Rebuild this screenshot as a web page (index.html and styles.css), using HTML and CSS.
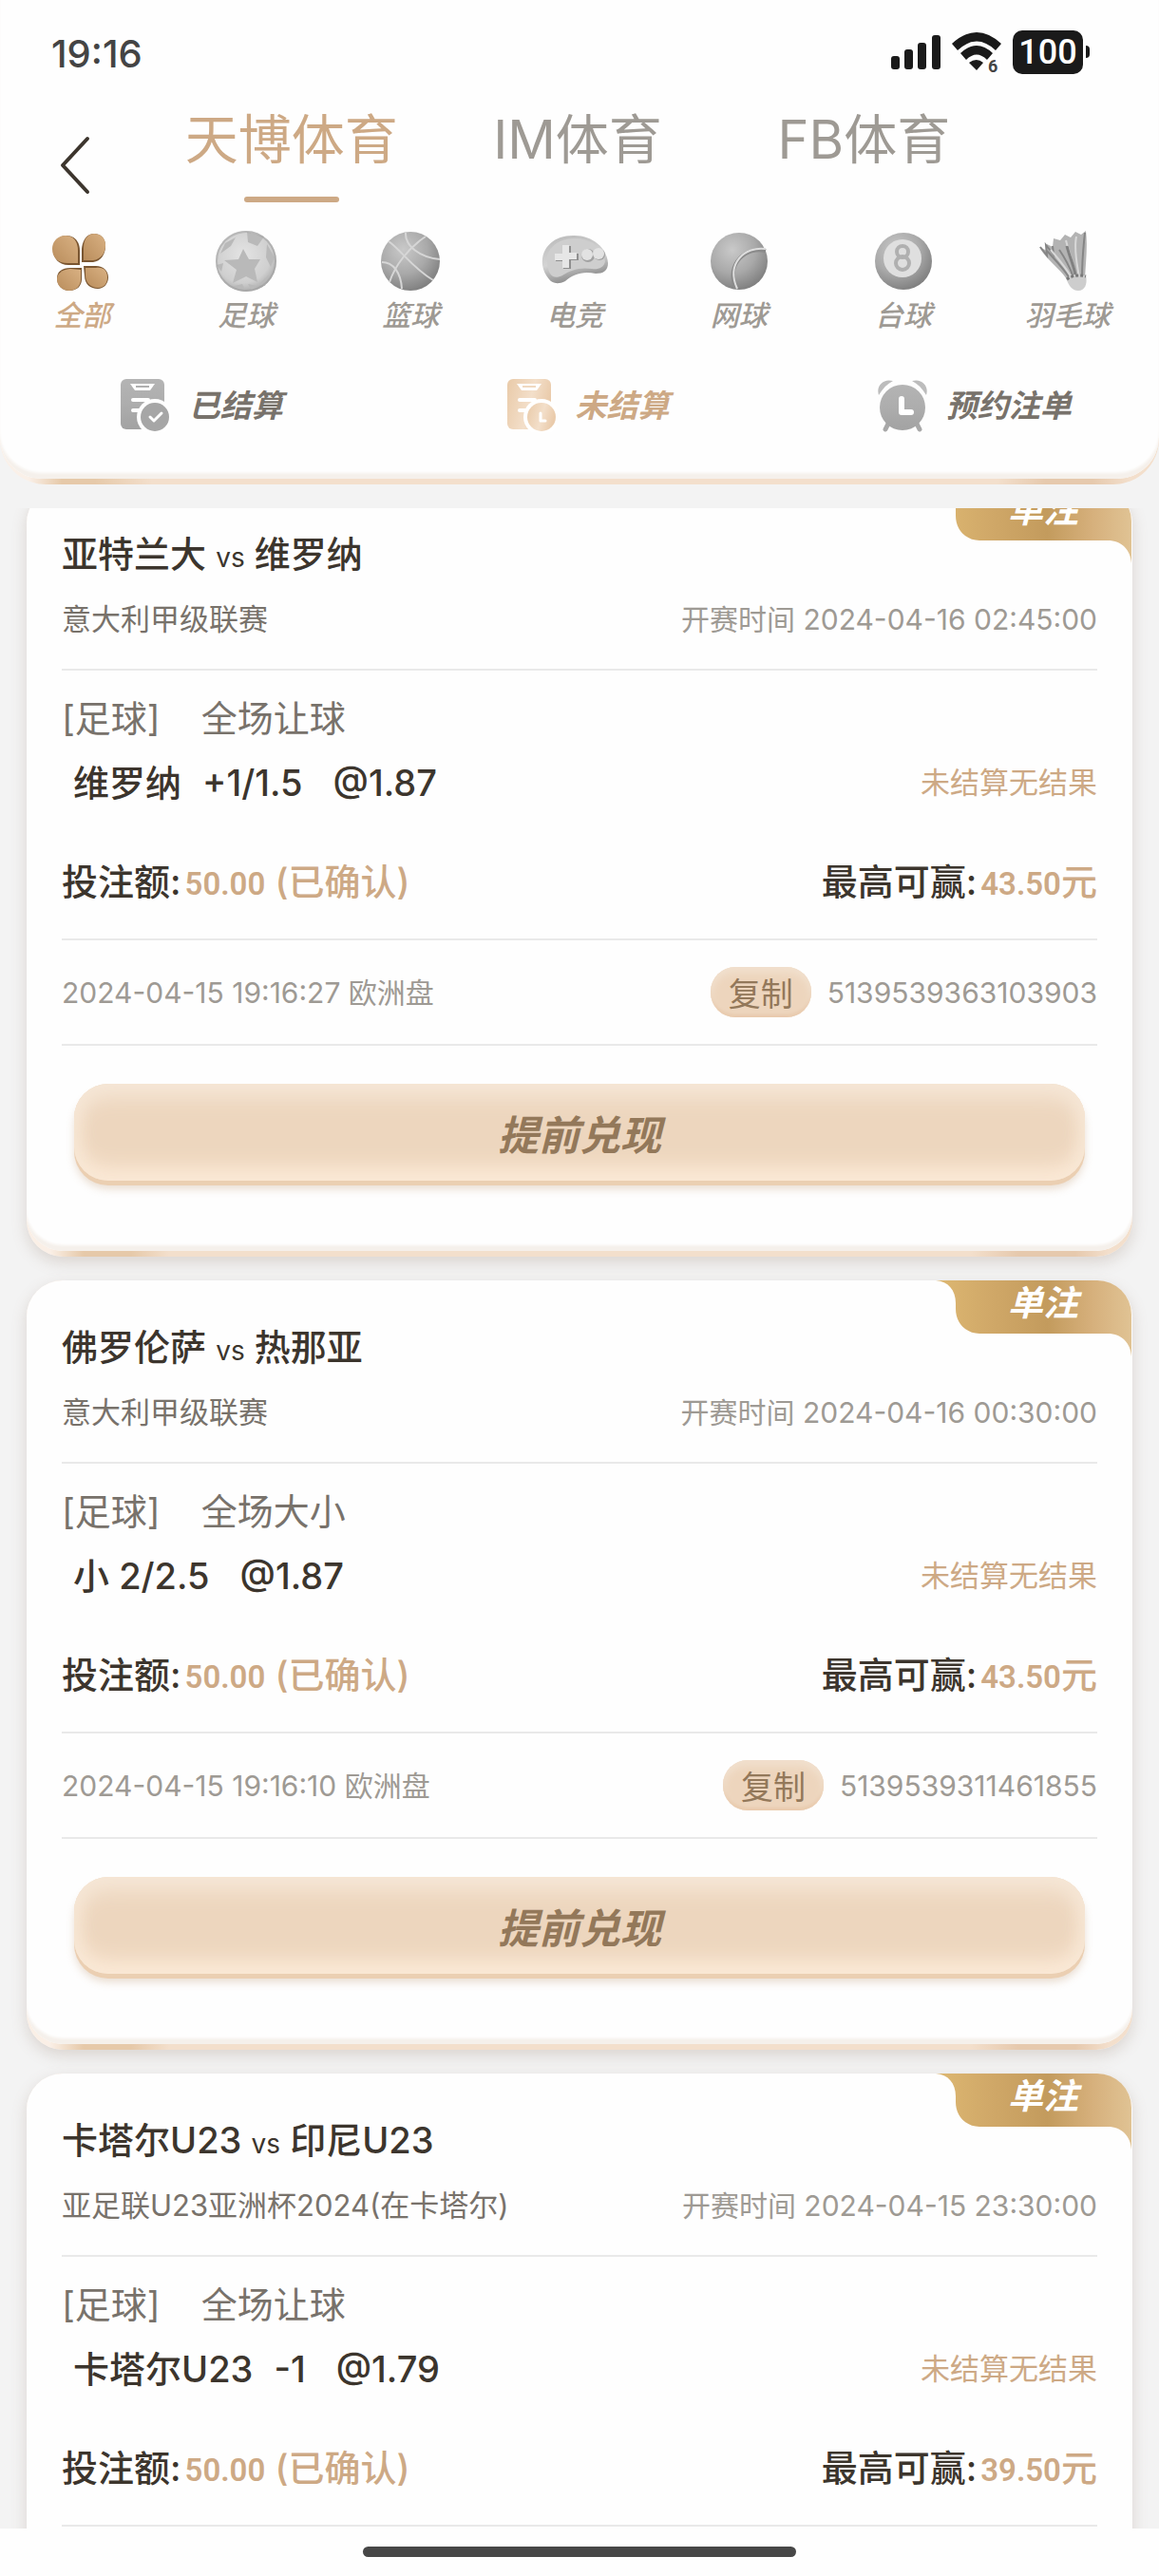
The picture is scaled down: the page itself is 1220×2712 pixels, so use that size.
FILE: index.html
```
<!DOCTYPE html>
<html lang="zh-CN">
<head>
<meta charset="utf-8">
<meta name="viewport" content="width=device-width, initial-scale=1">
<title>投注记录</title>
<link rel="stylesheet" href="styles.css">
</head>
<body>
<svg class="defs" width="0" height="0" aria-hidden="true">
  <defs>
    <radialGradient id="ball" cx="0.38" cy="0.3" r="0.75">
      <stop offset="0" stop-color="#c9c9c9"/><stop offset="0.55" stop-color="#a9a9a9"/><stop offset="1" stop-color="#7c7c7c"/>
    </radialGradient>
    <radialGradient id="soft" cx="0.45" cy="0.4" r="0.65">
      <stop offset="0" stop-color="#e4e4e4"/><stop offset="0.7" stop-color="#cfcfcf"/><stop offset="1" stop-color="#a4a4a4"/>
    </radialGradient>
    <linearGradient id="pad" x1="0" y1="0" x2="0.3" y2="1">
      <stop offset="0" stop-color="#b9b9b9"/><stop offset="0.6" stop-color="#d4d4d4"/><stop offset="1" stop-color="#8e8e8e"/>
    </linearGradient>
    <linearGradient id="petal" x1="1" y1="0" x2="0" y2="1">
      <stop offset="0" stop-color="#d9b183"/><stop offset="1" stop-color="#b98d5c"/>
    </linearGradient>
    <linearGradient id="grey" x1="0" y1="0" x2="0" y2="1">
      <stop offset="0" stop-color="#b4b4b4"/><stop offset="0.5" stop-color="#adadad"/><stop offset="1" stop-color="#a2a2a2"/>
    </linearGradient>
    <linearGradient id="sand" x1="0" y1="0" x2="1" y2="0.3">
      <stop offset="0" stop-color="#e9caa8"/><stop offset="0.6" stop-color="#f3dfca"/><stop offset="1" stop-color="#eacbab"/>
    </linearGradient>
    <linearGradient id="gold" x1="0" y1="0" x2="1" y2="0">
      <stop offset="0.05" stop-color="#dbb570"/><stop offset="0.28" stop-color="#d0a868"/><stop offset="0.57" stop-color="#c39b5d"/><stop offset="0.8" stop-color="#d6b07c"/><stop offset="1" stop-color="#e0c394"/>
    </linearGradient>
    <symbol id="ribbon" viewBox="0 0 207 80">
      <path fill="url(#gold)" d="M0 0H170A36 36 0 0 1 206 36V80C205 66 196 56 181 56H46C32 56 21 45 21 30V24C21 10 13 1 0 0Z"/>
    </symbol>
  </defs>
</svg>

<header class="header">
  <div class="header-body">
    <div class="status">
      <span class="clock">19:16</span>
      <div class="indicators">
        <svg width="52" height="36" viewBox="0 0 52 36" fill="#1a1a1a" aria-hidden="true">
          <rect x="0" y="22" width="9" height="14" rx="3"/><rect x="14" y="15" width="9" height="21" rx="3"/><rect x="28" y="8" width="9" height="28" rx="3"/><rect x="43" y="0" width="9" height="36" rx="3"/>
        </svg>
        <svg class="wifi" width="52" height="42" viewBox="0 0 52 42" fill="#1a1a1a" aria-hidden="true">
          <path d="M0 12Q26-12 52 12L46 19Q26 0 6 19Z"/><path d="M9 22Q26 6 43 22L37 29Q26 18 15 29Z"/><path d="M18 32Q26 26 33 32L26 40Z"/>
          <circle cx="44" cy="34" r="8" fill="#fff"/>
          <text x="38" y="42" font-family="Roboto, sans-serif" font-size="18" font-weight="700" fill="#444">6</text>
        </svg>
        <span class="battery">100</span>
      </div>
    </div>

    <div class="tabs-row">
      <button class="back" type="button" aria-label="返回">
        <svg width="34" height="66" viewBox="0 0 34 66" fill="none" stroke="#3c352d" stroke-width="4" stroke-linecap="round" stroke-linejoin="round"><path d="M30 5 4 33 30 61"/></svg>
      </button>
      <nav class="tabs">
        <a class="tab active" href="#">天博体育</a>
        <a class="tab" href="#">IM体育</a>
        <a class="tab" href="#">FB体育</a>
      </nav>
    </div>

    <nav class="sports">
      <a class="sport active" href="#">
        <svg class="sport-icon" viewBox="0 0 72 72">
          <g fill="#7a5631"><path d="M34 40V25C34 15 28 9 20 9C12 9 6 15 6 24C6 33 12 40 22 40Z"/><path d="M36 37V23C37 13 42 7 49 7C56 7 61 12 61 20C61 29 56 36 48 37Z"/><path d="M36 43V55C36 62 31 67 23 67C15 67 10 61 10 54C10 47 15 43 24 43Z"/><path d="M38 41H51C59 41 64 46 64 53C64 60 59 65 53 65C45 65 39 60 39 51Z"/></g>
          <g fill="url(#petal)"><path d="M32 38V25C32 15 27 9 19 9C11 9 5 15 5 23C5 32 11 38 21 38Z"/><path d="M38 35V22C38 12 43 7 49 7C56 7 61 12 61 19C61 28 56 34 48 35Z"/><path d="M35 45V55C35 62 30 67 23 67C15 67 10 61 10 55C10 49 15 45 24 44Z"/><path d="M40 43H51C59 42 63 46 63 53C63 60 59 64 53 64C46 64 40 59 40 51Z"/></g>
        </svg>
        <span>全部</span>
      </a>
      <a class="sport" href="#">
        <svg class="sport-icon" viewBox="0 0 72 72">
          <circle cx="36" cy="36" r="32" fill="url(#soft)"/>
          <g fill="#b9b9b9"><path d="M33 23 39 34 51 34 45 44 48 58 36 52 22 59 26 45 13 35 28 34Z"/><path d="M14 17 25 11 20 20 9 28ZM37 5 55 10 48 20 38 16ZM58 18 66 32 62 42 57 32ZM5 40 12 38 10 47ZM20 63 32 60 36 68ZM50 60 60 50 56 62ZM38 60 48 62 42 67Z"/></g>
          <circle cx="36" cy="36" r="31" fill="none" stroke="#9c9c9c" stroke-opacity=".5" stroke-width="2"/>
        </svg>
        <span>足球</span>
      </a>
      <a class="sport" href="#">
        <svg class="sport-icon" viewBox="0 0 72 72">
          <circle cx="36" cy="36" r="31" fill="url(#ball)"/>
          <g fill="none" stroke="#d6d6d6" stroke-width="2"><path d="M52 10C34 22 20 40 14 58"/><path d="M13 15C28 26 38 43 60 56"/><path d="M31 6C30 20 46 32 67 34"/><path d="M6 37C18 37 26 48 27 65"/></g>
        </svg>
        <span>篮球</span>
      </a>
      <a class="sport" href="#">
        <svg class="sport-icon" viewBox="0 0 72 72">
          <path d="M2 40C0 22 14 9 34 9C54 8 70 22 71 38C71 46 66 49 58 49C44 46 34 50 26 57C18 61 12 59 9 55C5 50 3 46 2 40Z" fill="url(#pad)"/>
          <path d="M7 38C5 24 16 13 34 12C52 11 66 22 68 36C67 43 60 45 54 44C40 42 31 46 23 51C13 56 8 50 7 38Z" fill="#cecece"/>
          <path d="M24 20h8v8h8v7h-8v9h-8v-8h-8v-7h8z" fill="#8f8f8f"/><path d="M23 19h7v8h8v7h-8v9h-7v-8h-8v-7h8z" fill="#e6e6e6"/>
          <circle cx="50" cy="30" r="7" fill="#a2a2a2"/><circle cx="62" cy="29" r="6" fill="#a2a2a2"/><circle cx="49" cy="29" r="6" fill="#e2e2e2"/><circle cx="61" cy="28" r="6" fill="#e2e2e2"/>
        </svg>
        <span>电竞</span>
      </a>
      <a class="sport" href="#">
        <svg class="sport-icon" viewBox="0 0 72 72">
          <circle cx="36" cy="36" r="30" fill="url(#ball)"/>
          <path d="M64 25C44 20 22 38 32 64" fill="none" stroke="#8a8a8a" stroke-width="4"/><path d="M64 23C42 20 22 38 34 65" fill="none" stroke="#dedede" stroke-width="2"/>
        </svg>
        <span>网球</span>
      </a>
      <a class="sport" href="#">
        <svg class="sport-icon" viewBox="0 0 72 72">
          <circle cx="36" cy="36" r="30" fill="url(#ball)"/><circle cx="35" cy="33" r="20" fill="#dfdfdf"/>
          <g fill="none" stroke="#b0b0b0" stroke-width="4"><circle cx="35" cy="26" r="6"/><circle cx="35" cy="38" r="7"/></g>
        </svg>
        <span>台球</span>
      </a>
      <a class="sport" href="#">
        <svg class="sport-icon" viewBox="0 0 72 72">
          <path d="M6 21 14 25 14 18 20 21 21 12 28 14 33 8 39 11 44 5 50 8 55 4C57 20 55 36 54 54L35 55C26 42 13 34 6 21Z" fill="#b3b3b3"/>
          <g fill="none" stroke-width="2"><path stroke="#858585" d="M14 25C24 36 32 44 38 54M7 21 14 30 13 19 21 29 20 20M27 24C34 34 38 42 42 53M54 6C52 24 51 38 51 53"/><path stroke="#d8d8d8" d="M18 24C28 36 36 45 40 54M34 14C38 30 43 42 45 53M45 10C42 24 46 40 48 53"/><path stroke="#808080" stroke-width="3" d="M35 20C38 32 42 40 44 50"/></g>
          <path d="M34 54C40 50 48 49 55 51C57 60 54 67 47 67C40 67 37 61 34 54Z" fill="#cdcdcd"/><path d="M35 55C40 51 48 50 55 52" fill="none" stroke="#777" stroke-width="3" stroke-dasharray="3 2"/>
        </svg>
        <span>羽毛球</span>
      </a>
    </nav>

    <nav class="filters">
      <a class="filter" href="#">
        <svg width="52" height="56" viewBox="0 0 52 56">
          <rect width="46" height="53" rx="6" fill="url(#grey)"/><path d="M10 5H36L31 12H15Z" fill="#fff"/><path d="M16 8H30" stroke="#b0b0b0" stroke-width="2"/>
          <path d="M13 22H29M13 33H22" stroke="#fff" stroke-width="4" stroke-linecap="round"/>
          <circle cx="36" cy="40" r="19" fill="#fff"/><circle cx="36" cy="40" r="15" fill="#a6a6a6"/><path d="M31 40 35 44 43 36" fill="none" stroke="#fff" stroke-width="3" stroke-linecap="round" stroke-linejoin="round"/>
        </svg>
        <span>已结算</span>
      </a>
      <a class="filter active" href="#">
        <svg width="52" height="56" viewBox="0 0 52 56">
          <rect width="46" height="53" rx="6" fill="url(#sand)"/><path d="M10 5H36L31 12H15Z" fill="#fff"/><path d="M16 8H30" stroke="#f0d9c0" stroke-width="2"/>
          <path d="M13 22H29M13 33H22" stroke="#fff" stroke-width="4" stroke-linecap="round"/>
          <circle cx="36" cy="40" r="19" fill="#fff"/><circle cx="36" cy="40" r="15" fill="url(#sand)"/><path d="M35 36V44H40" fill="none" stroke="#fff" stroke-width="3" stroke-linecap="round" stroke-linejoin="round"/>
        </svg>
        <span>未结算</span>
      </a>
      <a class="filter" href="#">
        <svg width="52" height="56" viewBox="0 0 52 56" fill="#bcbcbc">
          <path d="M1 17C-2 8 5-1 16 2C10 5 5 10 1 17ZM51 17C54 8 47-1 36 2C42 5 47 10 51 17Z"/>
          <path d="M12 45 8 53M40 45 44 53" stroke="#a8a8a8" stroke-width="5" stroke-linecap="round"/>
          <circle cx="26" cy="30" r="24" fill="url(#grey)"/><path d="M25 21V35H35" fill="none" stroke="#fff" stroke-width="6" stroke-linecap="round" stroke-linejoin="round"/>
        </svg>
        <span>预约注单</span>
      </a>
    </nav>
  </div>
</header>

<main class="list">
  <article class="card scrolled">
    <div class="card-body">
      <div class="badge"><svg width="207" height="80" aria-hidden="true"><use href="#ribbon"/></svg><span>单注</span></div>
      <h2 class="match">亚特兰大 <small>vs</small> 维罗纳</h2>
      <div class="row league"><span>意大利甲级联赛</span><time>开赛时间 2024-04-16 02:45:00</time></div>
      <div class="market"><span>[足球]</span><span>全场让球</span></div>
      <div class="row pick"><span class="choice"><b>维罗纳<span class="handicap">+1/1.5</span></b><b>@1.87</b></span><span class="result">未结算无结果</span></div>
      <div class="row stake"><p>投注额:<strong><i>50.00</i> (已确认)</strong></p><p>最高可赢:<strong><i>43.50</i>元</strong></p></div>
      <div class="row ticket"><span>2024-04-15 19:16:27 欧洲盘</span><span class="serial"><button class="copy" type="button">复制</button>5139539363103903</span></div>
      <button class="cashout" type="button">提前兑现</button>
    </div>
  </article>

  <article class="card">
    <div class="card-body">
      <div class="badge"><svg width="207" height="80" aria-hidden="true"><use href="#ribbon"/></svg><span>单注</span></div>
      <h2 class="match">佛罗伦萨 <small>vs</small> 热那亚</h2>
      <div class="row league"><span>意大利甲级联赛</span><time>开赛时间 2024-04-16 00:30:00</time></div>
      <div class="market"><span>[足球]</span><span>全场大小</span></div>
      <div class="row pick"><span class="choice"><b>小 2/2.5</b><b>@1.87</b></span><span class="result">未结算无结果</span></div>
      <div class="row stake"><p>投注额:<strong><i>50.00</i> (已确认)</strong></p><p>最高可赢:<strong><i>43.50</i>元</strong></p></div>
      <div class="row ticket"><span>2024-04-15 19:16:10 欧洲盘</span><span class="serial"><button class="copy" type="button">复制</button>5139539311461855</span></div>
      <button class="cashout" type="button">提前兑现</button>
    </div>
  </article>

  <article class="card">
    <div class="card-body">
      <div class="badge"><svg width="207" height="80" aria-hidden="true"><use href="#ribbon"/></svg><span>单注</span></div>
      <h2 class="match">卡塔尔U23 <small>vs</small> 印尼U23</h2>
      <div class="row league"><span>亚足联U23亚洲杯2024(在卡塔尔)</span><time>开赛时间 2024-04-15 23:30:00</time></div>
      <div class="market"><span>[足球]</span><span>全场让球</span></div>
      <div class="row pick"><span class="choice"><b>卡塔尔U23<span class="handicap">-1</span></b><b>@1.79</b></span><span class="result">未结算无结果</span></div>
      <div class="row stake"><p>投注额:<strong><i>50.00</i> (已确认)</strong></p><p>最高可赢:<strong><i>39.50</i>元</strong></p></div>
    </div>
  </article>
</main>

<footer class="home"><div class="home-bar"></div></footer>
</body>
</html>
```

FILE: styles.css
```
* { box-sizing: border-box; }

body {
  margin: 0;
  height: 100vh;
  display: flex;
  flex-direction: column;
  background: #f3f3f3;
  color: #3c352d;
  font-family: Inter, "Noto Sans CJK SC", sans-serif;
  font-size: 38px;
  line-height: 48px;
}

a { color: inherit; text-decoration: none; }
button { font-family: inherit; border: 0; padding: 0; cursor: pointer; }
svg { display: block; flex: none; }
.defs { position: absolute; }

/* header */
.header {
  flex: none;
  padding-bottom: 6px;
  margin-bottom: 25px;
  border-radius: 0 0 48px 48px;
  background: linear-gradient(90deg, #faf0e8 0, #faf0e8 30px, #e6c9a9 65px, #e6c9a9 100px, #f3dfcc 160px, #f3dfcc calc(100% - 170px), #e6c9ad calc(100% - 120px), #e6c9ad calc(100% - 70px), #f3dfcc calc(100% - 30px));
}
.header-body {
  padding-bottom: 49px;
  border-radius: 0 0 44px 44px;
  background: #fefefe;
  box-shadow: inset 0 -7px 3px -1px #f5f0eb;
}

.status {
  height: 110px;
  padding: 0 80px 0 54px;
  display: flex;
  align-items: center;
  justify-content: space-between;
}
.clock { padding-top: 4px; font-size: 40px; font-weight: 500; color: #444; }
.indicators { display: flex; align-items: center; gap: 12px; }
.wifi { overflow: visible; }
.battery {
  position: relative;
  width: 74px;
  height: 46px;
  border-radius: 10px;
  background: #1a1a1a;
  color: #fff;
  font: 500 36px/46px Roboto, sans-serif;
  text-align: center;
}
.battery::after {
  content: "";
  position: absolute;
  left: 77px;
  top: 16px;
  width: 4px;
  height: 13px;
  border-radius: 0 4px 4px 0;
  background: #1a1a1a;
}

.tabs-row { display: flex; height: 127px; padding-right: 160px; }
.back { width: 156px; padding-left: 62px; background: none; }
.tabs { flex: 1; display: flex; }
.tab {
  flex: 1;
  font-size: 56px;
  line-height: 74px;
  color: #9e9a94;
  text-align: center;
}
.tab.active { color: #cda985; }
.tab.active::after {
  content: "";
  display: block;
  width: 100px;
  height: 6px;
  margin: 23px auto 0;
  border-radius: 3px;
  background: #cda985;
}

.sports { display: flex; padding: 2px 10px 0 0; }
.sport {
  flex: 1;
  display: flex;
  flex-direction: column;
  align-items: center;
  font-size: 30px;
  line-height: 42px;
  font-weight: 500;
  font-style: italic;
  color: #9e9a94;
}
.sport.active { color: #cda985; }
.sport-icon { width: 72px; height: 72px; }

.filters { display: flex; padding-top: 46px; }
.filter {
  flex: 1;
  display: flex;
  align-items: center;
  justify-content: center;
  gap: 20px;
  padding-left: 18px;
  font-size: 33px;
  font-weight: 600;
  font-style: italic;
  color: #78726b;
}
.filter.active { color: #cda985; }

/* bet list */
.list { flex: 1; min-height: 0; overflow: hidden; padding: 0 28px; }
.card {
  margin-bottom: 25px;
  padding-bottom: 6px;
  border-radius: 38px;
  background: linear-gradient(90deg, #faefe6 0, #faefe6 25px, #e6c9a9 60px, #e6c9a9 110px, #f3dfcc 150px, #f3dfcc calc(100% - 170px), #e6c9ad calc(100% - 120px), #e6c9ad calc(100% - 60px), #f3dfcc calc(100% - 25px));
  box-shadow: 0 6px 16px rgba(130, 105, 85, 0.22);
}
.card.scrolled { margin-top: -22px; }
.card-body {
  position: relative;
  padding: 46px 37px 69px;
  border-radius: 38px;
  background: #fefefe;
  box-shadow: inset 0 -7px 3px -1px #f5f0eb;
}
.badge { position: absolute; top: 0; right: 0; }
.badge span {
  position: absolute;
  left: 76px;
  top: 0;
  color: #fff;
  font-size: 37px;
  font-weight: 700;
  font-style: italic;
  white-space: nowrap;
}

.match { margin: 0; font-size: 38px; font-weight: 500; }
.match small { font-size: 28px; font-weight: 400; line-height: 1; }
.row { display: flex; align-items: center; justify-content: space-between; }

.league {
  padding: 21px 0 28px;
  border-bottom: 2px solid #e9e9e9;
  font-size: 31px;
  color: #78726b;
}
.league time { font-size: 30px; color: #9e9a94; }
.market { display: flex; gap: 43px; padding-top: 26px; color: #78726b; }
.pick { padding: 20px 0 0 12px; }
.pick b { font-weight: 500; }
.choice { display: flex; gap: 32px; }
.handicap { margin-left: 22px; }
.result { font-size: 31px; color: #cda985; }
.stake { padding: 56px 0 36px; border-bottom: 2px solid #e9e9e9; font-weight: 500; }
.stake p { margin: 0; }
.stake strong { margin-left: 4px; font-weight: 500; color: #cda985; }
.stake i { font: 600 33px/1 Roboto, sans-serif; }
.ticket {
  height: 111px;
  border-bottom: 2px solid #e9e9e9;
  font-size: 30px;
  color: #9e9a94;
}
.serial { display: flex; align-items: center; gap: 17px; }
.copy {
  width: 106px;
  height: 53px;
  border-radius: 26px;
  background: #edd5bd;
  box-shadow: inset 0 6px 8px #f1e0ce, inset 0 -3px 3px #e8c9ac;
  color: #93785a;
  font-size: 34px;
}
.cashout {
  display: block;
  width: calc(100% - 26px);
  height: 102px;
  margin: 40px auto 5px;
  border-radius: 36px;
  background: #edd6be;
  box-shadow: inset 0 14px 22px #f5e6d6, inset 0 -14px 22px #fbe9d6, inset 0 0 20px #f6e3cc, 0 5px 0 #ebcfb2, 0 9px 8px rgba(190, 150, 110, 0.3);
  color: #93785a;
  font-size: 43px;
  font-weight: 700;
  font-style: italic;
}

/* home indicator */
.home { flex: none; height: 50px; padding-top: 19px; background: #fefefe; }
.home-bar { width: 456px; height: 11px; margin: 0 auto; border-radius: 6px; background: #474747; }
```
